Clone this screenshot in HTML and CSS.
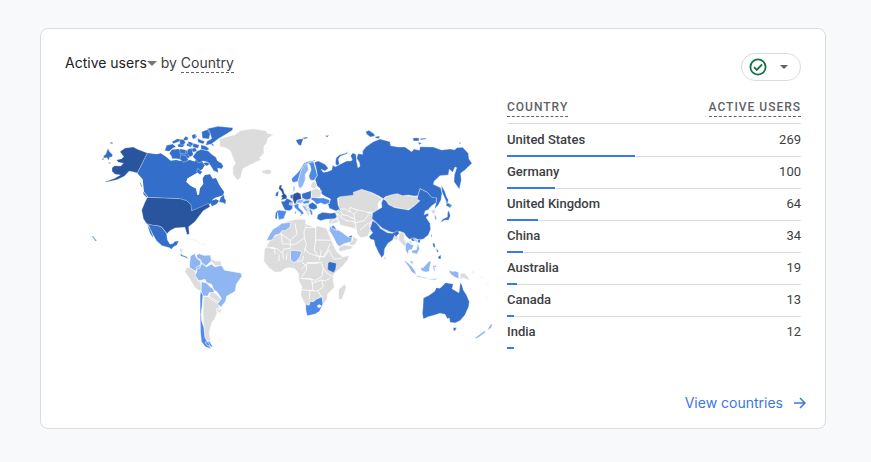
FILE: index.html
```html
<!DOCTYPE html>
<html lang="en">
<head>
<meta charset="utf-8">
<title>Active users by Country</title>
<link rel="stylesheet" href="styles.css">
</head>
<body>
<main class="card">
  <header class="card-header">
    <h2 class="title"><button class="metric" type="button">Active users<svg class="caret" viewBox="0 0 10 5" aria-hidden="true"><path d="M0 0h10L5 5z"/></svg></button> by <span class="dimension">Country</span></h2>
    <button class="status" type="button" aria-label="Data quality">
      <svg class="check" viewBox="0 0 18 18" aria-hidden="true"><circle cx="9" cy="9" r="7.6"/><path d="M5 9.2l2.7 2.7 5.4-5.6"/></svg>
      <svg class="caret-small" viewBox="0 0 8 4" aria-hidden="true"><path d="M0 0h8L4 4z"/></svg>
    </button>
  </header>
  <div class="content">
    <svg class="map" viewBox="89 120 410 235" role="img" aria-label="World map of active users">
      <!-- Alaska, western Canada, Mexico -->
      <g transform="translate(90 110) scale(.33333)">
        <path class="canada" d="M172 129L200 133 212 130 228 140 242 152 258 150 272 153 300 150 315 155 325 145 332 150 345 165 335 178 318 190 292 205 288 215 302 228 318 236 322 256 345 256 345 290 305 302 303 284 290 272 270 266 175 262 162 245 158 208 142 190z"/>
        <g class="strong">
          <path d="M54 115l5 10 9 9-2 7-7 1-3 10-5-9-11 1 1-7 6-4zM60 97h8v4h-6zM56 157l6 1-1 4-5-2zM37 145l5 1-2 5-4-3z"/>
          <path d="M224 122l6-16 18-4 10 8-12 6-8 8zM238 130l8-12 10 0 8-2 14 6 14-1 10 12-4 10-20 7-18-4-14 0-2-8zM246 95l16-9 14 3-6 5-20 7zM262 104l14-5 8 5-6 8-13-1zM280 87l7-8 8 4-2 7-11 2zM290 102l12-7 9 9-10 7-11-4zM306 76l10-4 5 8-7 6-8-4zM302 116l15-3 4 10-12 4z"/>
          <path d="M151 215l6 16-3-1-4-10zM159 244l14 16-4 2-9-9zM170 341l35 6 10 4 15 20 2 18 8 14 10-3 4-6 12-1-5 12-10 5-7 8-6-5-22-6-16-14-12-20-12-26z"/>
          <path d="M171 342l10 16 8 20 0 5-9-13z"/>
        </g>
        <path class="strong" d="M4 378l5 1 7 9 5 3-5 2-6-9z"/>
      </g>
      <!-- Eastern Canada, Arctic islands, Greenland -->
      <g transform="translate(180 110) scale(.33333)">
        <path class="canada" d="M50 142L60 148 62 158 72 168 68 176 48 190 22 205 18 216 30 228 46 236 50 255 57 254 60 235 70 222 68 205 75 195 90 193 98 206 108 204 118 225 132 245 130 256 105 263 94 272 108 268 117 272 110 282 96 289 92 280 78 290 60 292 35 302 33 284 20 272 0 266 0 152 45 155z"/>
        <g class="strong">
          <path d="M65 65l20-7 6 12-4 17-20-2zM81 56l33-7 45 4-2 8-24 15-18 10-20 16-18 4 4-12 14-8-3-12zM35 76l9-4 4 10-9 6zM53 85l12 6 9 3-4 8-16-5zM0 88l12 1 5 10-11 7-7-5zM24 94l15 5-2 8-12-4zM40 100l18 5-4 10-16-3zM0 116l18 4-2 12-16-2zM23 118l12-3 5 20-10 6-9-10zM63 104l15 5 10 8-9 5-16-5zM92 104l7-3 3 8zM50 124l14-6 20 4 10 10 14 10 4 10 13 8 5 9-5 8-12-3 2 14-14-6-9-15-8-10-14-4-14 6-10-11-8-8zM2 134l15 3 9 14-17 6-9-9zM53 175l14 11-7 8-10-8zM68 160l14-4 8 6-10 6zM122 262l10-8 2 12 4 5-2 12-7-5-12-2z"/>
        </g>
        <g class="none"><path d="M119 86l45-12 18-13 38-5 38 6 4 8 20 3-18 12-4 15-8 8 0 22-14 14 6 5-35 17-20 10-7 27-10 8-13-17-1-22 8-12-7-16-8-22-16-9-16-3zM246 181l10-1 14-2 6 9-10 7-19-4z"/></g>
      </g>
      <!-- United States -->
      <g transform="translate(90 110) scale(.33333)">
        <path class="dark" d="M90 125l15-11 25-3 13 7 29 11-30 60-14-4-11-1-14 15-22 10-34 8-1-2 28-10 17-10-16-2-9-9 0-11 8-6 18 1 8-8-15-3-6-7 16-4 6-6z"/>
        <path class="dark" d="M172 262L270 266 290 272 303 284 305 302 330 292 356 280 360 290 340 302 326 320 315 335 296 350 298 372 291 374 285 352 255 354 240 362 231 371 215 351 205 347 190 346 170 341 160 326 155 300 164 278z"/>
      </g>
      <!-- Central and South America -->
      <g transform="translate(180 240) scale(.33333)">
        <g class="none"><path d="M0 24l9 4-2 12-8-6zM20 82l17 2 10 12 6 26 10 5 2 29-20-12-20-34-11-15zM93 54l12 9 18 0 2 15-20 0-8-10-8-5zM70 168l20 2 26 17 2 18-14 32-8 11-8 28 4 30-18-10-4-40-1-42zM110 205l15 4-4 10-11-2zM90 158l10-2 16 13 8 9-7 14-12-6-17-12z"/></g>
        <path class="faint" d="M18 -6l25 6 17 9M62 12l14 2"/>
        <g class="light"><path d="M31 48l13-8 6 15 13 9-3 20-7 2-7 8-18-12 1-14zM50 44l8-3 14 5 20-1 2 18-17 16-10-6-6-14-11-6zM48 82l12-6 8-7 12 11 14-8 11 8 20-4 8 14 50 9 3 10-17 24-3 21-26 15-3 15-14 18-11-10 12-16-6-10-9-12-8-3-6-18-15-5-5-10-18 5-12-16 6-14zM64 125l16 4 10 11 12 8 1 10-15 0-4 10-18 1-3-18z"/></g>
        <path class="mid" d="M62 150l7 17-3 36-3 20 2 18 7 22 3 30 12 18 7 15-18-5-12-16-3-30-1-58 0-50zM75 307l13-4 12 19-17-5z"/>
        <path class="strong" d="M1 39l7 7 12 4 5 7-10-5-12-4z"/>
        <path class="faint" d="M114 301l5-3 4 3-4 3z"/>
      </g>
      <!-- Africa and the Middle East -->
      <g transform="translate(255 200) scale(.33333)">
        <g class="none"><path d="M82 70l20-8 28-5 22 1 1 14 14 5 14 7 6-7 28 8 8 20 10 25 13 26 18 14 19-4-4 13-18 22-24 20-3 18 5 22-20 20-3 18-14 18-18 15-25 4-8-20-14-30 3-26-9-20 0-20-12-14-16-3-14 4-12 9-16 1-20-14-15-20 2-34 22-35zM251 268l9-8 10-9 4 12-12 34-10 3-2-16zM222 75l0-20 10-16 14-2 14 10 18 3 16 10 12-4-10-14-15-4 2-18 12 3 28 0 40 6 15 14 18 5-14 18-8 18-22 12-18 6-14-14-20 0-28-10-12-6-6-7z"/>
        <path d="M253 141l14-6 28 2-6 10-34 8-5-8zM292 108l17 10-8 15-14 6-5-12 10-5z"/></g>
        <path class="border" d="M32 125l16-12 28-12 30 20 20-18-6-33M78 98l4 34 24 0 0 14-20 1-4 13-16-14-20-1M104 120l4 15 17-4 23-18-1-17 6-20M148 113l6 20-6 24M152 83l30-1 0 38 45 1M182 120l-4 30 10 18 18 2 10-17 10-22M148 145l12 14 28 10 20 2 15-22M126 184l16-1 4-16M141 187l13 9 0 15-14 19M154 188l45-1 6 18-5 25-18 11-14-3-31-3M138 208l20-18 32 0M140 235l30 2 4 35-37-3M171 250l28-10 12 3 14-9M200 240l5 20-17 13-22-1M165 272l-2 26M188 272l12 19M205 205l10 14 22 13M222 151l15 26 20-1 13-16M199 150l-6 30M32 141l25 2 4 20M72 163l0 20M84 160l1 18M96 160l-2 20M250 60l5 24M260 50l0 25 25 17 18 10M282 55l6 22 22 3 15 18M300 42l12 15 15 2-5 15M290 35l15 15M254 49l18 6M230 44l20 18M226 72l12-14 14-4"/>
        <g class="light"><path d="M80 70l15-2 12-2-2 16-14 10-10 0-7 10-14 4-8 14-18 2 10-20 11-16 12-6zM106 154l6-3 22 2 6 4-5 14-11 13-7 4-10-8zM223 80l10-3 12 10 14 8 20 15 12 2-1 13-22 6-16 9-8-10-9-18-12-20z"/></g>
        <path class="strong" d="M219 190l5-5 20 5-2 18-6 10-18-9zM280 110l12-5-3 8z"/>
        <path class="mid" d="M152 312l10 4 4-12 9 1 10-8 16-7 3 22-10 22-14 9-24 5-4-18z"/><path class="hole" d="M185 318l8-5 7 5-8 7z"/>
      </g>
      <!-- Russia and Central Asia -->
      <g transform="translate(340 125) scale(.33333)">
        <path class="none" d="M-5 213L35 210 37 198 62 191 82 198 97 204 128 222 115 233 115 257 95 265 93 280 88 300 40 310 0 300-8 270-13 252-5 240z"/>
        <path class="border" d="M-5 252l22 0 10 9 4-14 20 8 20 8 27-2M5 268l18 4 28 14 24-5M29 258l20 15 22-6 26 0M0 275l18 12 34 4M54 265l4 20-12 20M75 270l2 22 24 4"/>
        <path class="none" d="M132 218L155 209 172 206 188 212 205 211 222 214 234 212 232 222 241 229 228 238 214 250 196 255 180 250 156 248 146 240 136 226z"/>
        <g class="strong">
          <path d="M-77 112L-65 108-45 118-35 130-45 138-57 133-50 142-38 140-25 135-22 121-14 125 0 118 20 108 32 108 37 105 32 92 38 84 48 88 50 110 54 128 60 124 58 112 50 100 54 86 68 88 68 78 78 65 100 50 120 42 150 50 152 62 175 66 195 66 215 80 222 72 238 76 240 65 280 66 305 75 330 72 345 74 350 68 368 67 385 85 387 102 396 115 380 130 378 133 362 145 364 165 358 193 342 170 343 150 350 128 345 126 338 142 328 133 325 150 300 152 283 168 280 178 302 188 306 205 303 225 295 240 284 252 288 235 290 220 275 218 262 202 240 191 234 212 222 213 205 210 188 212 172 206 155 209 136 215 130 221 115 212 97 203 88 200 65 193 40 202 40 211 0 215-8 220-6 240 3 262-12 258-32 250-36 238-28 222-45 214-58 205-60 190-72 180-75 160-70 145-72 128z"/>
          <path d="M-14 90l2-16 10-9 20-6 6-5-3 7-20 8-6 8 3 15-7 5zM77 -5l10-4 15 10 3 7-14 3-11-8zM105 10l14-2-2 8-10-2zM218 15l10-2 10 2-2 8-15 0zM240 16l16-2 3 3-16 3zM234 26l12 4-8 4zM356 29l5-2 2 5z" transform="translate(0 25)"/>
          <path d="M304 180l10 18 6 18 5 8-2 15-8-18-9-20zM316 228l8 5 12 7-6 9-8-6z"/>
        </g>
      </g>
      <!-- Europe -->
      <g transform="translate(255 120) scale(.33333)">
        <g class="none"><path d="M172 185l10 0 4 15-10 8-10-8zM166 212l15-8 18 8-2 20-28 0zM137 228l24 3 8 12-14 22-12-10-10-16zM150 252l10 2 6 22-4 14-8-10zM238 277l14-8 12 14-8 4z"/></g>
        <g class="dark"><path d="M74 196l7-1-2 9 6 4 3 12 8 8-1 8-18 4 5-7-4-5 5-4-4-10-8-8zM115 222l12-5 10 4 2 16-8 6 1 7-14 1-4-11-2-8z"/></g>
        <g class="strong"><path d="M63 218l8-5-2 16-8-1zM78 244l10 0 8-9 10 5 8 6-2 20-8 6-14-1-8-16zM140 221l10-3 18-6 0 23-12 5-14-6zM106 226l8-3-1 14-7-4zM63 274l5 2-2 21-6-2zM160 254l12-7 13 9 2 8-10 5-14-3zM188 284l15-7 22 3 16-2 4 12-5 6-28 2-15 4-11-6zM160 264l8 5-4 5zM122 60l12-3 11-1-3 8-4 13-8-3zM140 54l14-3 6 3-12 3zM210 47l12-1-5 6z"/></g>
        <g class="mid"><path d="M63 273l10-3 22 3-8 23-16 4-4-22zM111 174l15-14 8-10 13-21 14-6 19-4 0 5-14 3-10 5-14 19-6 18-8 16-14 3-5-8zM158 128l7-3 10-5 3 13 6 20 3 14-10 15-12-2-4-12 7-18-3-14zM116 254l16-4-1 12 12 12 4 6-7 6-4-8-10-9-7-6zM132 283l8 3-3 3zM170 232l25 2 10-1 20 7-2 10-14 4-12-5-12 5-8-10-10-6zM119 274l4-1 0 9-4 0zM144 242l18-2 2 9-15 3-8-4zM162 266l8 3 4 15-6 2zM228 320l8-4 11 16-17-8z"/></g>
        <g class="light"><path d="M129 184l5-19 5-17 12-17 7 2 3 16-10 14 0 17-7 17-9 10-6-11zM104 248l10 1-1 7-10-2zM126 241l12-3 11 5-13 8-13-4zM114 200l6-1-1 17-5-3zM138 254l14 5 9 20-11-8z"/></g>
      </g>
      <!-- South and East Asia, Oceania -->
      <g transform="translate(360 190) scale(.33333)">
        <g class="none"><path d="M-18 72l14-12 20 5 19 7 6 14-12 14 2 20-8 20-22 3-10-13zM62 113l12 2 20 10-2 4-26-7zM118 132l8-9 8 10-1 16 7 10-6 11-8-8-12-14zM72 198l7 3-2 8-6-1zM211 61l14-4 2 11-8 5zM144 150l9 2 6 16-7-2zM301 249l14 1 9 11 7 11-13-5-9-3-9 5zM100 134l10 0 6 12-6 5-8-4z"/></g>
        <path class="border" d="M-20 100l32-8 14-18M0 120l26-22"/>
        <g class="strong">
          <path d="M38 69L66 52 64 38 70 27 78 32 86 44 104 53 122 56 146 60 160 50 172 40 180 32 172 28 174 17 180-4 202 7 215 22 230 24 228 38 214 48 204 60 196 62 192 74 205 70 206 76 198 82 210 100 212 118 205 135 190 147 178 150 160 144 148 148 138 138 132 128 118 124 108 130 92 126 66 114 50 98 36 86z"/>
          <path d="M38 92L50 100 62 116 82 128 98 130 112 122 118 130 108 140 104 135 98 150 84 160 74 176 72 194 65 203 56 188 45 165 42 150 32 148 27 140 38 128 30 116z"/>
          <path d="M242 95l7-8 13-6 1-15 4-4 4 16-5 12-14 1-5 4zM261 39l12 6-7 5-8-3zM174 149l7-2-2 13-6-4zM213 133l3 4-3 6zM218 160l6 0 2 13-6-3zM228 175l8 9-4 4zM234 201l8-7 1 13-7 0zM152 145l14-1 0 9-10 0z"/>
          <path d="M190 324L207 316 224 304 229 293 240 295 250 285 256 278 280 282 276 296 291 305 297 308 301 277 306 286 310 300 320 316 328 335 326 350 315 375 300 392 285 399 270 397 268 384 262 386 255 373 240 370 222 376 205 380 190 387 187 370 189 350z"/>
          <path d="M280 413l10 0-5 10-5-2z"/>
        </g>
        <g class="light"><path d="M222 75l6 1 3 11-6 4zM136 163l8-8 7 8 11 1-6 15-9 1-3 14-7-12zM155 181l14-2 4-20-13-12 10 0 4 13 5 16-8 17-16-5zM133 211l12 8 12 12 9 13 3 11-14-9-10-17-11-14zM150 210l8 3 2 11-8-6zM169 256l18 4 16 3-1 3-32-6zM181 232l8 1 7-7 12-14 5 6-3 11-2 15-10 3-14-5zM219 227l12-1-3 6-5 0 4 11-4 1-4-9zM206 267l17-1 13-3-10 7-19-1zM265 240l13 4 8-1 10 4 1 20-12-5-12-8zM383 418l8-15 6-2-2 12-9 6zM345 443l14-10 16-12 1 7-18 13-10 6z"/></g>
        <path class="faint" d="M336 243l8 5-5 3zM358 258l12 7M375 278l14 10M377 320l9 7M8 438h5"/>
      </g>
    </svg>
    <table class="countries">
      <thead><tr><th scope="col"><span>COUNTRY</span></th><th scope="col"><span>ACTIVE USERS</span></th></tr></thead>
      <tbody>
        <tr><td>United States<i class="bar" style="width:43.6%"></i></td><td>269</td></tr>
        <tr><td>Germany<i class="bar" style="width:16.2%"></i></td><td>100</td></tr>
        <tr><td>United Kingdom<i class="bar" style="width:10.4%"></i></td><td>64</td></tr>
        <tr><td>China<i class="bar" style="width:5.6%"></i></td><td>34</td></tr>
        <tr><td>Australia<i class="bar" style="width:3.3%"></i></td><td>19</td></tr>
        <tr><td>Canada<i class="bar" style="width:2.3%"></i></td><td>13</td></tr>
        <tr><td>India<i class="bar" style="width:2.3%"></i></td><td>12</td></tr>
      </tbody>
    </table>
  </div>
  <footer class="card-footer">
    <a class="link" href="#countries">View countries<svg class="arrow" viewBox="0 0 12 12" aria-hidden="true"><path d="M0 6h11M6 1l5 5-5 5"/></svg></a>
  </footer>
</main>
</body>
</html>
```
FILE: styles.css
```css
* { box-sizing: border-box; }
body {
  margin: 0;
  padding: 28px 45px 32px 40px;
  background: #f8f9fa;
  color: #3c4043;
  font-family: Roboto, "Liberation Sans", sans-serif;
}
button { font: inherit; color: inherit; background: none; border: 0; padding: 0; cursor: pointer; }
.card {
  display: flex;
  flex-direction: column;
  background: #fff;
  border: 1px solid #dadce0;
  border-radius: 8px;
  padding: 24px 24px 15px;
}
.card-header { display: flex; justify-content: space-between; align-items: flex-start; }
.title { margin: 0; font: 400 14px/20px Inter, sans-serif; }
.metric { color: #202124; }
.caret { width: 10px; height: 5px; margin-bottom: 2px; fill: #757575; }
.dimension { display: inline-block; line-height: 19px; border-bottom: 1px dashed #5f6368; }
.status {
  display: flex;
  align-items: center;
  gap: 13px;
  height: 28px;
  padding: 0 12px 0 7px;
  border: 1px solid #dadce0;
  border-radius: 14px;
}
.check { width: 18px; height: 18px; fill: none; stroke: #137346; stroke-width: 1.8; }
.caret-small { width: 8px; height: 4px; fill: #5f6368; }
.content { display: grid; grid-template-columns: minmax(0, 410fr) minmax(0, 294fr); gap: 8px; margin-left: 24px; align-items: start; }
.map { width: 100%; margin-top: 39px; stroke: #fff; stroke-width: 2; stroke-linejoin: round; }
.none { fill: #dcdcdc; }
.light { fill: #8fb5f2; }
.mid { fill: #4d89e8; }
.strong { fill: #336fca; stroke-width: 1; }
.canada { fill: #336fca; stroke: none; }
.dark { fill: #29559f; stroke-width: 1; }
.hole { fill: #fff; stroke: none; }
.border { fill: none; stroke-width: 2.5; }
.faint { fill: none; stroke: #eee; }
.countries { width: 100%; margin-top: 11px; border-collapse: separate; border-spacing: 0; font-size: 13px; line-height: 16px; }
.countries th, .countries td { padding: 0; text-align: left; vertical-align: top; border-bottom: 1px solid #dadce0; }
.countries th { height: 32px; padding-top: 7px; font-size: 12px; font-weight: 500; letter-spacing: 1px; color: #5f6368; }
.countries th span { display: inline-block; line-height: 17px; border-bottom: 1px dashed #5f6368; }
.countries td { height: 32px; padding-top: 7px; font-weight: 500; }
.countries tbody tr { position: relative; }
.countries tbody tr:first-child td { height: 33px; padding-top: 8px; }
.countries th:last-child, .countries td:last-child { text-align: right; }
.countries td:last-child { font-weight: 400; }
.countries tbody tr:last-child td { border-color: transparent; }
.bar { position: absolute; left: 0; bottom: 0; height: 2px; background: #3b78e0; }
.card-footer { display: flex; justify-content: flex-end; margin-top: 38px; margin-right: -5px; }
.link { display: flex; align-items: center; gap: 11px; color: #3b78e0; font: 400 14px/20px Inter, sans-serif; text-decoration: none; }
.arrow { width: 12px; height: 12px; fill: none; stroke: currentColor; stroke-width: 1.5; }
```
